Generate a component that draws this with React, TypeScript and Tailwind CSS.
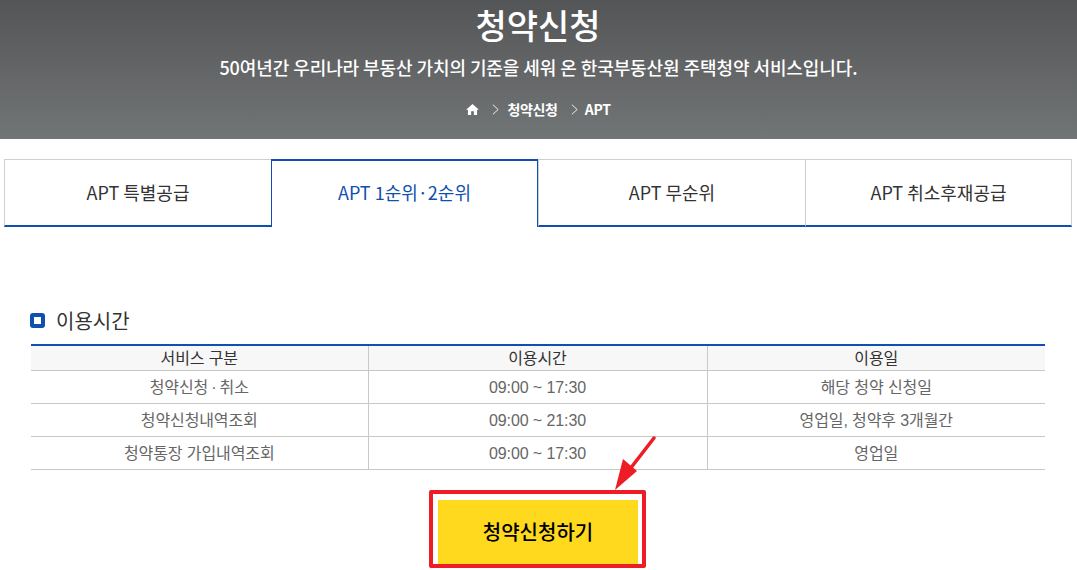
const font = '[font-family:"Noto_Sans_CJK_KR","Noto_Sans",sans-serif]';

function Tab({ label, active, last }: { label: string; active?: boolean; last?: boolean }) {
  return (
    <div
      className={
        "w-[267px] h-[68px] flex items-center justify-center text-[18px] " +
        (active
          ? "border-x border-x-[#0f4fb0] border-t-2 border-t-[#0f4fb0] text-[#0f4fb0] pb-[3px]"
          : "border-t border-t-[#cfcfcf] border-l border-l-[#cfcfcf] border-b-2 border-b-[#0f4fb0] text-[#333] " + (last ? "border-r border-r-[#cfcfcf]" : ""))
      }
    >
      {label}
    </div>
  );
}

const rows = [
  ["청약신청\u2009·\u2009취소", "09:00 ~ 17:30", "해당 청약 신청일"],
  ["청약신청내역조회", "09:00 ~ 21:30", "영업일, 청약후 3개월간"],
  ["청약통장 가입내역조회", "09:00 ~ 17:30", "영업일"],
];

export default function App() {
  return (
    <div className={"relative w-[1077px] h-[570px] overflow-hidden bg-white " + font}>
      <header className="h-[139px] bg-gradient-to-b from-[#545557] to-[#727576] flex flex-col items-center text-white">
        <h1 className="mt-[3px] text-[34px] leading-[44px] font-medium -translate-x-[0.5px]">청약신청</h1>
        <p className="mt-[8px] text-[18px] leading-[24px] font-medium tracking-[-0.08px]">50여년간 우리나라 부동산 가치의 기준을 세워 온 한국부동산원 주택청약 서비스입니다.</p>
        <nav className="mt-[20px] h-[20px] flex items-center text-[14px] font-bold tracking-[-0.3px]">
          <svg viewBox="0 0 14 12" className="w-[13px] h-[11px]" fill="#fff">
            <path d="M7 0 L14 6.2 L12 6.2 L12 12 L8.5 12 L8.5 8 L5.5 8 L5.5 12 L2 12 L2 6.2 L0 6.2 Z" />
          </svg>
          <svg viewBox="0 0 8 12" className="w-[7px] h-[11px] ml-[13px]" fill="none" stroke="#fff" strokeWidth="1">
            <path d="M1 .5 L7 6 L1 11.5" />
          </svg>
          <span className="ml-[8px]">청약신청</span>
          <svg viewBox="0 0 8 12" className="w-[7px] h-[11px] ml-[13px]" fill="none" stroke="#fff" strokeWidth="1">
            <path d="M1 .5 L7 6 L1 11.5" />
          </svg>
          <span className="ml-[7px]">APT</span>
        </nav>
      </header>

      <div className="mt-[20px] ml-[4px] flex">
        <Tab label="APT 특별공급" />
        <Tab label="APT 1순위·2순위" active />
        <Tab label="APT 무순위" />
        <Tab label="APT 취소후재공급" last />
      </div>

      <section className="ml-[31px] w-[1014px] mt-[79px]">
        <div className="flex items-center h-[28px] -ml-px">
          <span className="w-[15px] h-[15px] rounded-[3px] bg-[#0f4fb0] flex items-center justify-center">
            <span className="w-[7px] h-[7px] bg-white" />
          </span>
          <span className="ml-[11px] pt-px text-[20px] text-[#333]">이용시간</span>
        </div>
        <table className='mt-[10px] w-full table-fixed border-collapse border-t-2 border-t-[#0f4fb0] text-[16px] tracking-[-0.1px] [font-family:"Liberation_Sans","Noto_Sans_CJK_KR",sans-serif]'>
          <colgroup>
            <col className="w-[337px]" />
            <col className="w-[339px]" />
            <col />
          </colgroup>
          <thead>
            <tr className="h-[25px] bg-[#f7f7f7] text-[#333] border-b border-b-[#c8c8c8]">
              <th className="font-normal p-0 pt-[2px] leading-[20px]">서비스 구분</th>
              <th className="font-normal p-0 pt-[2px] leading-[20px] border-l border-l-[#c8c8c8]">이용시간</th>
              <th className="font-normal p-0 pt-[2px] leading-[20px] border-l border-l-[#c8c8c8]">이용일</th>
            </tr>
          </thead>
          <tbody className="text-[#666]">
            {rows.map((r) => (
              <tr key={r[0]} className="h-[33px] border-b border-b-[#c8c8c8]">
                <td className="text-center p-0 pt-[2px]">{r[0]}</td>
                <td className="text-center p-0 pt-[2px] border-l border-l-[#c8c8c8]">{r[1]}</td>
                <td className="text-center p-0 pt-[2px] border-l border-l-[#c8c8c8]">{r[2]}</td>
              </tr>
            ))}
          </tbody>
        </table>
      </section>

      <div className="mt-[30px] ml-[438px]">
        <button className="w-[200px] h-[64px] bg-[#ffd91e] text-black text-[20px] font-medium block">청약신청하기</button>
      </div>

      <div className="absolute left-[429px] top-[490px] w-[217px] h-[78px] border-[4px] border-[#ee1c25] rounded-[2px] pointer-events-none" />
      <svg className="absolute left-[610px] top-[432px] pointer-events-none" width="50" height="62" viewBox="0 0 50 62">
        <path d="M44 6 L20 37" stroke="#ee1c25" strokeWidth="3.5" strokeLinecap="round" />
        <path d="M5 58 L13 27 L27 39 Z" fill="#ee1c25" />
      </svg>
    </div>
  );
}
